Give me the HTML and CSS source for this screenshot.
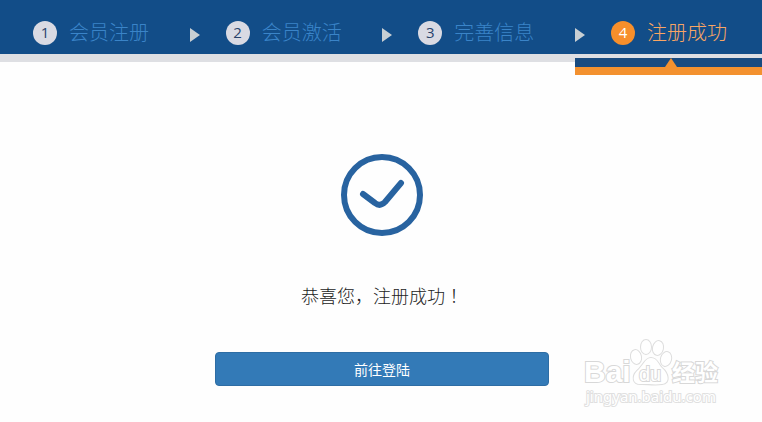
FILE: index.html
```
<!DOCTYPE html>
<html lang="zh-CN">
<head>
<meta charset="utf-8">
<meta name="viewport" content="width=device-width, initial-scale=1">
<title>注册成功</title>
<link rel="stylesheet" href="styles.css">
</head>
<body>
<header class="header">
  <ol class="steps">
    <li class="step"><span class="num">1</span><span class="label">会员注册</span><span class="arrow"></span></li>
    <li class="step"><span class="num">2</span><span class="label">会员激活</span><span class="arrow"></span></li>
    <li class="step"><span class="num">3</span><span class="label">完善信息</span><span class="arrow"></span></li>
    <li class="step active" aria-current="step"><span class="num">4</span><span class="label">注册成功</span><span class="marker"></span></li>
  </ol>
</header>
<main class="result">
  <svg class="check" viewBox="0 0 84 84" aria-hidden="true">
    <circle cx="42" cy="42" r="38"/>
    <path d="M23 41 L35 50 Q40 54 45 49 L61 30"/>
  </svg>
  <p class="message">恭喜您，注册成功<span class="mark" lang="zh-TW">！</span></p>
  <button class="login" type="button">前往登陆</button>
</main>
<svg class="watermark" viewBox="0 0 144 72" aria-label="Baidu经验">
  <g class="paw">
    <ellipse cx="54" cy="19" rx="5" ry="7" transform="rotate(-12 54 19)"/>
    <ellipse cx="64" cy="9" rx="5" ry="7"/>
    <ellipse cx="76" cy="10" rx="5" ry="7" transform="rotate(12 76 10)"/>
    <ellipse cx="84" cy="21" rx="5" ry="7" transform="rotate(16 84 21)"/>
    <path d="M69 20 C75 20 76 26 80 30 C86 35 89 45 80 46 C74 47 66 46 60 46 C50 47 50 38 55 33 C61 28 63 20 69 20 Z"/>
  </g>
  <text class="brand" x="2" y="44">Bai</text>
  <text class="brand-small" x="57" y="43">du</text>
  <text class="brand-cn" x="90" y="43">经验</text>
  <text class="site" x="4" y="64">jingyan.baidu.com</text>
</svg>
</body>
</html>
```
FILE: styles.css
```
* {
  box-sizing: border-box;
}

body {
  margin: 0;
  min-height: 100vh;
  position: relative;
  background: #fefefe;
  color: #222;
  font-family: "Open Sans", "Noto Sans CJK SC", sans-serif;
}

.header {
  background: #124d88;
  border-bottom: 8px solid #dedfe3;
  padding-left: 33px;
}

.steps {
  display: grid;
  grid-template-columns: repeat(3, 1fr) 151px;
  margin: 0;
  padding: 0;
  list-style: none;
}

.step {
  position: relative;
  display: flex;
  align-items: center;
  height: 54px;
  padding-top: 12px;
}

.num {
  width: 24px;
  height: 24px;
  border-radius: 50%;
  background: #d9dae3;
  color: #28436c;
  font-size: 15px;
  line-height: 22px;
  text-align: center;
}

.label {
  margin-left: 12px;
  color: #3a84c8;
  font-size: 20px;
  font-weight: 300;
  line-height: 24px;
}

.arrow {
  margin: 4px 26px 0 auto;
  border-left: 10px solid #c8cfd3;
  border-top: 7px solid transparent;
  border-bottom: 7px solid transparent;
}

.active .num {
  background: #f78f2b;
  color: #fff;
}

.active .label {
  color: #f9a563;
}

.marker {
  position: absolute;
  top: 58px;
  left: -36px;
  right: 0;
  height: 17px;
  background: #184b80;
  border-bottom: 8px solid #f3912f;
}

.marker::before {
  content: "";
  position: absolute;
  bottom: 0;
  left: 90px;
  border-bottom: 9px solid #f3912f;
  border-left: 6px solid transparent;
  border-right: 6px solid transparent;
}

.result {
  display: flex;
  flex-direction: column;
  align-items: center;
  padding: 91px 0 0 2px;
}

.check {
  width: 84px;
  height: 84px;
  fill: none;
  stroke: #2863a0;
  stroke-width: 6;
  stroke-linecap: round;
  stroke-linejoin: round;
}

.message {
  margin: 44px 0 42px;
  font-size: 18px;
  font-weight: 300;
  line-height: 28px;
}

.mark {
  font-family: "Noto Sans CJK TC", sans-serif;
}

.login {
  width: 44%;
  height: 34px;
  border: 1px solid #2e6da4;
  border-radius: 4px;
  background: #337ab7;
  color: #fff;
  font-family: inherit;
  font-size: 14px;
}

.watermark {
  position: absolute;
  top: 338px;
  right: 36px;
  width: 144px;
  height: 72px;
  fill: #fff;
  stroke: #d8d8d8;
  stroke-width: 2;
  font-family: "Liberation Sans", "Noto Sans CJK SC", sans-serif;
  paint-order: stroke;
}

.paw {
  stroke: #dedede;
}

.brand {
  font-size: 30px;
  font-weight: 700;
}

.brand-small {
  font-size: 20px;
}

.brand-cn {
  font-size: 23px;
  font-weight: 700;
}

.site {
  font-family: "Noto Sans", sans-serif;
  font-size: 15px;
  stroke: #e0e0e0;
}
```
